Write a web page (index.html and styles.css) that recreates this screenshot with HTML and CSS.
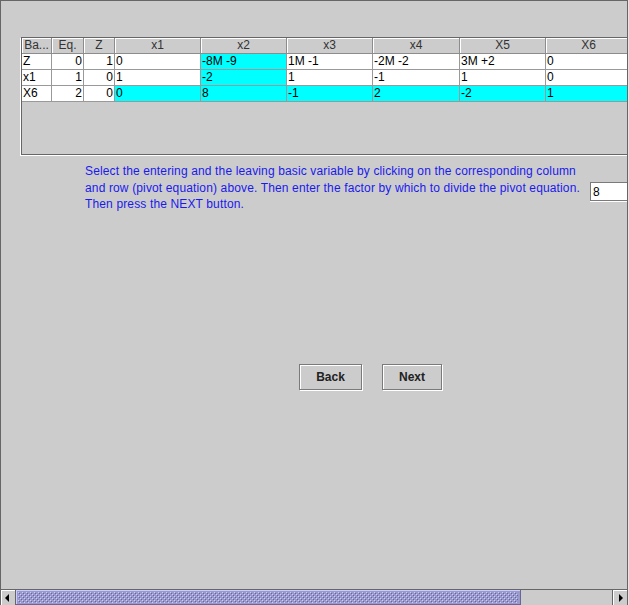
FILE: index.html
```html
<!DOCTYPE html>
<html>
<head>
<meta charset="utf-8">
<link rel="stylesheet" href="styles.css">
</head>
<body>
<div class="window">
  <div class="pane">
    <div class="grid">
      <div class="row head">
        <div class="c">Ba...</div><div class="c">Eq.</div><div class="c">Z</div><div class="c">x1</div><div class="c">x2</div><div class="c">x3</div><div class="c">x4</div><div class="c">X5</div><div class="c">X6</div>
      </div>
      <div class="row">
        <div class="c">Z</div><div class="c num">0</div><div class="c num">1</div><div class="c">0</div><div class="c hl">-8M -9</div><div class="c">1M -1</div><div class="c">-2M -2</div><div class="c">3M +2</div><div class="c">0</div>
      </div>
      <div class="row">
        <div class="c">x1</div><div class="c num">1</div><div class="c num">0</div><div class="c">1</div><div class="c hl">-2</div><div class="c">1</div><div class="c">-1</div><div class="c">1</div><div class="c">0</div>
      </div>
      <div class="row">
        <div class="c">X6</div><div class="c num">2</div><div class="c num">0</div><div class="c hl">0</div><div class="c hl">8</div><div class="c hl">-1</div><div class="c hl">2</div><div class="c hl">-2</div><div class="c hl">1</div>
      </div>
    </div>
  </div>

  <div class="instr">
    <p class="msg">Select the entering and the leaving basic variable by clicking on the corresponding column<br>and row (pivot equation) above. Then enter the factor by which to divide the pivot equation.<br>Then press the NEXT button.</p>
    <input class="factor" type="text" value="8">
  </div>

  <div class="buttons">
    <button class="btn back">Back</button>
    <button class="btn next">Next</button>
  </div>

  <div class="hscroll">
    <div class="arrow left"><span class="tri tri-left"></span></div>
    <div class="thumb">
      <svg class="bumps" width="100%" height="100%"><defs><pattern id="bp" width="4" height="4" patternUnits="userSpaceOnUse"><rect x="0" y="0" width="1" height="1" fill="#ccccff"/><rect x="1" y="1" width="1" height="1" fill="#666699"/><rect x="2" y="2" width="1" height="1" fill="#ccccff"/><rect x="3" y="3" width="1" height="1" fill="#666699"/></pattern></defs><rect width="100%" height="100%" fill="url(#bp)"/></svg>
    </div>
    <div class="track"></div>
    <div class="arrow right"><span class="tri tri-right"></span></div>
  </div>
</div>
</body>
</html>
```
FILE: styles.css
```css
html, body {
  margin: 0;
  padding: 0;
  background: #cccccc;
}
body {
  font-family: "Liberation Sans", Arial, sans-serif;
  font-size: 12px;
}
.window {
  width: 628px;
  height: 605px;
  box-sizing: border-box;
  border: 1px solid #666666;
  border-bottom: none;
  background: #cccccc;
  display: flex;
  flex-direction: column;
  overflow: hidden;
  box-shadow: 1px 0 0 #e6e6e6;
}
.pane {
  flex: none;
  margin: 36px 0 0 20px;
  height: 118px;
  box-sizing: border-box;
  border: 1px solid #666666;
  border-right: none;
  box-shadow: 0 1px 0 #ffffff, -1px 1px 0 #ffffff;
  overflow: hidden;
}
.grid {
  width: 610px;
}
.row {
  display: grid;
  grid-template-columns: 30px 32px 31px 86px 86px 86px 87px 86px 86px;
  height: 16px;
}
.c {
  box-sizing: border-box;
  border-right: 1px solid #999999;
  border-bottom: 1px solid #999999;
  background: #ffffff;
  color: #000000;
  line-height: 15px;
  padding: 0 1px;
  white-space: nowrap;
  overflow: hidden;
}
.head .c {
  background: #cccccc;
  color: #333333;
  text-align: center;
  box-shadow: inset 1px 1px 0 #ffffff;
  border-right-color: #8c8c8c;
  border-bottom-color: #8c8c8c;
}
.c.num {
  text-align: right;
}
.c.hl {
  background: #00ffff;
}
.instr {
  flex: none;
  display: flex;
  align-items: flex-start;
  margin-top: 8px;
  padding-left: 84px;
}
.msg {
  margin: 0;
  width: 505px;
  flex: none;
  color: #1a1aee;
  line-height: 16.5px;
  font-size: 12px;
  letter-spacing: 0.14px;
  white-space: nowrap;
}
.factor {
  flex: none;
  margin: 19px 0 0 0;
  width: 60px;
  height: 19px;
  box-sizing: border-box;
  border: 1px solid #7a7a7a;
  border-right: none;
  box-shadow: 0 1px 0 #ffffff;
  background: #ffffff;
  padding: 0 2px;
  font-family: "Liberation Sans", Arial, sans-serif;
  font-size: 12px;
  color: #000000;
  outline: none;
}
.buttons {
  flex: none;
  display: flex;
  gap: 20px;
  margin-top: 151px;
  padding-left: 298px;
}
.btn {
  height: 26px;
  box-sizing: border-box;
  padding: 0;
  margin: 0;
  background: #cccccc;
  border: 1px solid #7a7a7a;
  box-shadow: inset 1px 1px 0 #ffffff, 1px 1px 0 #ffffff;
  font-family: "Liberation Sans", Arial, sans-serif;
  font-weight: bold;
  font-size: 12px;
  color: #222222;
}
.btn.back { width: 63px; }
.btn.next { width: 60px; }
.hscroll {
  flex: none;
  margin-top: auto;
  height: 16px;
  box-sizing: border-box;
  border-top: 1px solid #666666;
  display: flex;
  background: #cccccc;
}
.arrow {
  flex: none;
  width: 15px;
  box-sizing: border-box;
  box-shadow: inset 1px 1px 0 #ffffff;
  display: flex;
  align-items: center;
  justify-content: center;
}
.arrow.left { border-right: 1px solid #666666; }
.arrow.right { border-left: 1px solid #666666; }
.tri {
  width: 0;
  height: 0;
  border-top: 4px solid transparent;
  border-bottom: 4px solid transparent;
}
.tri-left { border-right: 4px solid #000000; margin-left: -2px; }
.tri-right { border-left: 4px solid #000000; margin-left: 2px; }
.thumb {
  flex: none;
  width: 505px;
  box-sizing: border-box;
  background: #9999cc;
  border-right: 1px solid #666699;
  border-bottom: 1px solid #666699;
  box-shadow: inset 1px 1px 0 #ccccff;
  padding: 2px 2px 1px 2px;
  display: flex;
}
.bumps {
  display: block;
  flex: 1;
}
.track {
  flex: 1;
  background: #cccccc;
}
```
